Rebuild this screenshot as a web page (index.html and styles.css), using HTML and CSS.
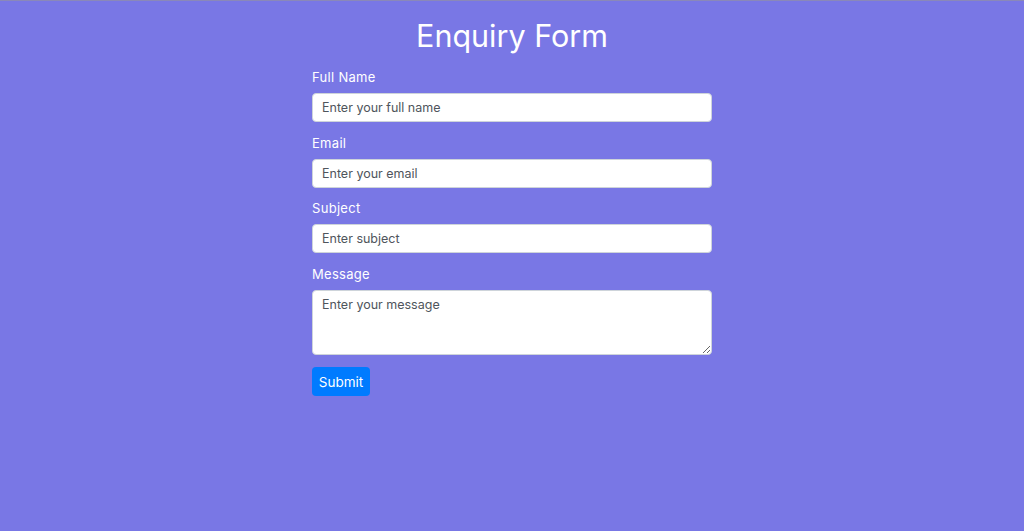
FILE: index.html
```html
<!DOCTYPE html>
<html lang="en">
<head>
<meta charset="utf-8">
<title>Enquiry Form</title>
<link rel="stylesheet" href="styles.css">
</head>
<body>
<main class="page">
  <h1 class="title">Enquiry Form</h1>
  <form class="form">
    <div class="group">
      <label class="label" for="name">Full Name</label>
      <input class="field" id="name" type="text" placeholder="Enter your full name">
    </div>
    <div class="group">
      <label class="label" for="email">Email</label>
      <input class="field" id="email" type="email" placeholder="Enter your email">
    </div>
    <div class="group">
      <label class="label" for="subject">Subject</label>
      <input class="field" id="subject" type="text" placeholder="Enter subject">
    </div>
    <div class="group">
      <label class="label" for="message">Message</label>
      <textarea class="field area" id="message" placeholder="Enter your message"></textarea>
    </div>
    <div class="actions">
      <button class="submit" type="button">Submit</button>
    </div>
  </form>
</main>
</body>
</html>
```

FILE: styles.css
```css
html, body {
  margin: 0;
  padding: 0;
  height: 100%;
}
body {
  background: #7977e5;
  border-top: 1px solid #8a88b8;
  box-sizing: border-box;
  font-family: Inter, "Noto Sans", sans-serif;
  color: #fff;
}
.page {
  width: 400px;
  margin: 0 auto;
  padding-top: 16px;
}
.title {
  margin: 0 0 14px;
  text-align: center;
  font-size: 30.5px;
  font-weight: 400;
  line-height: 38px;
}
.form {
  display: flex;
  flex-direction: column;
}
.group {
  display: flex;
  flex-direction: column;
  margin-bottom: 12.6px;
}
.label {
  font-size: 13px;
  line-height: 16px;
  letter-spacing: 0.3px;
  margin-bottom: 8px;
}
.field {
  box-sizing: border-box;
  width: 100%;
  height: 29px;
  border: 1px solid #ced4da;
  border-radius: 4px;
  background: #fff;
  padding: 0 9px;
  font-family: inherit;
  font-size: 12.5px;
  color: #495057;
  outline: none;
}
.field::placeholder {
  color: #4f555c;
  opacity: 1;
}
.area {
  height: 65px;
  padding-top: 6px;
  resize: vertical;
  display: block;
}
.actions {
  display: flex;
}
.submit {
  width: 58px;
  height: 29px;
  border: none;
  border-radius: 4px;
  background: #007bff;
  color: #fff;
  font-family: inherit;
  font-size: 13.5px;
  padding: 0;
}
```
